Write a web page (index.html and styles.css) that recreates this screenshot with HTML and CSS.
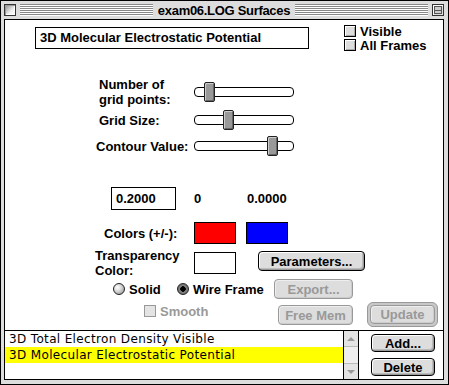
FILE: index.html
```html
<!DOCTYPE html>
<html lang="en">
<head>
    <meta charset="UTF-8">
    <meta name="viewport" content="width=device-width, initial-scale=1.0">
    <title>exam06.LOG Surfaces</title>
    <link rel="stylesheet" href="styles.css">
</head>
<body>
    <div class="window">
        <div class="titlebar">
            <div class="wbox close-box"></div>
            <div class="stripes"></div>
            <div class="title">exam06.LOG Surfaces</div>
            <div class="stripes"></div>
            <div class="wbox zoom-box"><div class="zoom-inner"></div></div>
        </div>

        <div class="frame">
            <div class="content">
                <div class="top-row">
                    <div class="name-field">3D Molecular Electrostatic Potential</div>
                    <div class="checks">
                        <div class="check"><span class="cb"></span>Visible</div>
                        <div class="check"><span class="cb"></span>All Frames</div>
                    </div>
                </div>

                <div class="slider-row row-points">
                    <div class="slider-label">Number of<br>grid points:</div>
                    <div class="track"><span class="thumb" style="left: 9px"></span></div>
                </div>
                <div class="slider-row row-size">
                    <div class="slider-label">Grid Size:</div>
                    <div class="track"><span class="thumb" style="left: 28px"></span></div>
                </div>
                <div class="slider-row row-contour">
                    <div class="slider-label">Contour Value:</div>
                    <div class="track"><span class="thumb" style="left: 72px"></span></div>
                </div>

                <div class="value-row">
                    <div class="value-field">0.2000</div>
                    <div class="num">0</div>
                    <div>0.0000</div>
                </div>

                <div class="color-row">
                    <div class="row-label colors-label">Colors (+/-):</div>
                    <div class="swatch red"></div>
                    <div class="swatch blue"></div>
                </div>

                <div class="trans-row">
                    <div class="row-label two-line">Transparency<br>Color:</div>
                    <div class="swatch white"></div>
                    <div class="btn params-btn">Parameters...</div>
                </div>

                <div class="radio-row">
                    <div class="radio-item solid-item"><span class="radio"></span>Solid</div>
                    <div class="radio-item wire-item"><span class="radio on"></span>Wire Frame</div>
                    <div class="btn off export-btn">Export...</div>
                </div>

                <div class="smooth-row">
                    <div class="check smooth"><span class="cb"></span>Smooth</div>
                    <div class="btn off freemem-btn">Free Mem</div>
                    <div class="default-ring">
                        <div class="btn off update-btn">Update</div>
                    </div>
                </div>

                <div class="list-area">
                    <div class="surface-list">
                        <div class="list-item">3D Total Electron Density Visible</div>
                        <div class="list-item selected">3D Molecular Electrostatic Potential</div>
                    </div>
                    <div class="scrollbar">
                        <div class="arrow up"><span></span></div>
                        <div class="scroll-track"></div>
                        <div class="arrow down"><span></span></div>
                    </div>
                    <div class="list-buttons">
                        <div class="btn small-btn">Add...</div>
                        <div class="btn small-btn">Delete</div>
                    </div>
                </div>
            </div>
        </div>
    </div>
</body>
</html>
```

FILE: styles.css
```css
body {
    margin: 0;
    font-family: "Liberation Sans", Arial, sans-serif;
    font-size: 13px;
    font-weight: bold;
    color: #000;
    background: #fff;
}

.window {
    width: 449px;
    height: 385px;
    box-sizing: border-box;
    border: 1px solid #000;
    background: #dddddd;
    display: flex;
    flex-direction: column;
}

/* title bar */
.titlebar {
    height: 18px;
    display: flex;
    align-items: center;
    padding: 0 4px 0 3px;
}

.wbox {
    width: 12px;
    height: 12px;
    box-sizing: border-box;
    border: 1px solid #333;
    flex-shrink: 0;
}

.close-box {
    background: linear-gradient(135deg, #888, #eee 60%, #fff);
    box-shadow: inset 1px 1px #999, inset -1px -1px #fff;
}

.zoom-box {
    background: #ddd;
    padding: 1px;
    box-shadow: inset 1px 1px #fff;
}

.zoom-inner {
    height: 100%;
    box-sizing: border-box;
    border: 1px solid #555;
    background: linear-gradient(#ccc 0 3px, #555 3px 4px, #ccc 4px);
}

.stripes {
    flex: 1;
    height: 12px;
    margin: 0 4px;
    background: repeating-linear-gradient(to bottom, #888 0 1px, #fff 1px 2px);
}

.title {
    padding: 0 1px;
    letter-spacing: -0.3px;
    white-space: nowrap;
}

/* frame and content */
.frame {
    flex: 1;
    display: flex;
    padding: 0 4px 4px 3px;
}

.content {
    flex: 1;
    border: 1px solid #000;
    background: #fff;
    display: flex;
    flex-direction: column;
}

.top-row {
    display: flex;
    align-items: flex-start;
    padding-top: 4px;
    height: 28px;
}

.name-field {
    margin: 3px 0 0 30px;
    width: 274px;
    height: 22px;
    box-sizing: border-box;
    border: 1px solid #000;
    padding-left: 4px;
    line-height: 20px;
}

.checks {
    margin-left: 35px;
}

.check {
    display: flex;
    align-items: center;
    height: 14px;
}

.cb {
    width: 12px;
    height: 12px;
    box-sizing: border-box;
    border: 1px solid #000;
    background: #ddd;
    box-shadow: inset 1px 1px #fff, inset -1px -1px #aaa;
    margin-right: 4px;
}

/* sliders */
.slider-row {
    display: flex;
    align-items: center;
    padding-left: 91px;
}

.row-points {
    margin-top: 24px;
    height: 32px;
}

.row-size {
    height: 24px;
}

.row-contour {
    margin-top: 2px;
    height: 24px;
}

.slider-label {
    width: 98px;
    box-sizing: border-box;
    padding-left: 3px;
    line-height: 15px;
}

.row-contour .slider-label {
    padding-left: 0;
}

.track {
    position: relative;
    width: 100px;
    height: 10px;
    box-sizing: border-box;
    border: 1px solid #000;
    border-radius: 4px;
    background: #fff;
}

.thumb {
    position: absolute;
    top: -6px;
    width: 11px;
    height: 20px;
    box-sizing: border-box;
    border: 1px solid #222;
    border-radius: 2px;
    background: #999;
    box-shadow: inset 1px 1px #ccc, inset -1px -1px #666;
}

/* value row */
.value-row {
    display: flex;
    align-items: center;
    margin-top: 29px;
    height: 23px;
    padding-left: 106px;
}

.value-field {
    width: 65px;
    height: 23px;
    box-sizing: border-box;
    border: 1px solid #000;
    padding-left: 4px;
    line-height: 21px;
}

.num {
    margin-left: 18px;
    width: 53px;
}

/* colors */
.color-row, .trans-row {
    display: flex;
    align-items: center;
    padding-left: 90px;
}

.color-row {
    margin-top: 12px;
    height: 22px;
}

.trans-row {
    margin-top: 7px;
    height: 24px;
}

.row-label {
    width: 99px;
    box-sizing: border-box;
    line-height: 15px;
}

.colors-label {
    padding-left: 9px;
}

.swatch {
    width: 42px;
    height: 22px;
    box-sizing: border-box;
    border: 1px solid #000;
}

.red { background: #ff0000; }
.blue { background: #0000ff; margin-left: 10px; }
.white { background: #fff; }

/* buttons */
.btn {
    box-sizing: border-box;
    border: 1px solid #000;
    border-radius: 4px;
    background: #ddd;
    box-shadow: inset 1px 1px #fff, inset -1px -1px #999, inset -2px -2px #bbb;
    display: flex;
    align-items: center;
    justify-content: center;
}

.btn.off {
    border-color: #999;
    color: #999;
    box-shadow: inset 1px 1px #eee, inset -1px -1px #ccc;
}

.params-btn {
    align-self: flex-start;
    margin-left: 22px;
    width: 107px;
    height: 20px;
}

/* radio row */
.radio-row {
    display: flex;
    align-items: center;
    margin-top: 4px;
    height: 20px;
    padding-left: 108px;
}

.radio-item {
    display: flex;
    align-items: center;
}

.solid-item { width: 64px; }
.wire-item { width: 97px; }

.radio {
    width: 12px;
    height: 12px;
    box-sizing: border-box;
    border: 1px solid #222;
    border-radius: 50%;
    background: radial-gradient(circle at 35% 35%, #fff 0, #ddd 35%, #888 100%);
    margin-right: 4px;
}

.radio.on {
    background: radial-gradient(circle, #000 0 2.5px, #888 3px, #555 100%);
}

.export-btn {
    width: 79px;
    height: 20px;
}

/* smooth row */
.smooth-row {
    display: flex;
    align-items: flex-start;
    margin-top: 3px;
    height: 25px;
    padding-left: 139px;
}

.smooth {
    width: 134px;
    margin-top: 2px;
    height: 14px;
    color: #999;
}

.smooth .cb {
    border-color: #999;
    background: #e4e4e4;
    box-shadow: none;
}

.freemem-btn {
    margin-top: 3px;
    width: 75px;
    height: 20px;
}

.default-ring {
    margin-left: 14px;
    width: 71px;
    height: 25px;
    box-sizing: border-box;
    border: 1px solid #999;
    border-radius: 6px;
    background: #c8c8c8;
    padding: 2px;
}

.update-btn {
    height: 100%;
}

/* list */
.list-area {
    flex: 1;
    display: flex;
    margin-top: 3px;
    border-top: 1px solid #000;
}

.surface-list {
    width: 338px;
    font-family: "DejaVu Sans", sans-serif;
    font-weight: normal;
    font-size: 12px;
    letter-spacing: 0.35px;
}

.list-item {
    height: 16px;
    line-height: 16px;
    padding-left: 4px;
    white-space: nowrap;
}

.list-item.selected {
    background: #ffff00;
}

.scrollbar {
    width: 16px;
    box-sizing: border-box;
    border-left: 1px solid #000;
    border-right: 1px solid #000;
    background: #eee;
    display: flex;
    flex-direction: column;
}

.arrow {
    height: 15px;
    display: flex;
    align-items: center;
    justify-content: center;
    background: #e4e4e4;
}

.arrow.up { border-bottom: 1px solid #bbb; }
.arrow.down { border-top: 1px solid #bbb; }

.arrow span {
    width: 0;
    height: 0;
    border-left: 4px solid transparent;
    border-right: 4px solid transparent;
}

.arrow.up span { border-bottom: 4px solid #999; }
.arrow.down span { border-top: 4px solid #999; }

.scroll-track {
    flex: 1;
}

.list-buttons {
    display: flex;
    flex-direction: column;
    gap: 6px;
    padding: 3px 0 0 12px;
}

.small-btn {
    width: 64px;
    height: 18px;
}
```
